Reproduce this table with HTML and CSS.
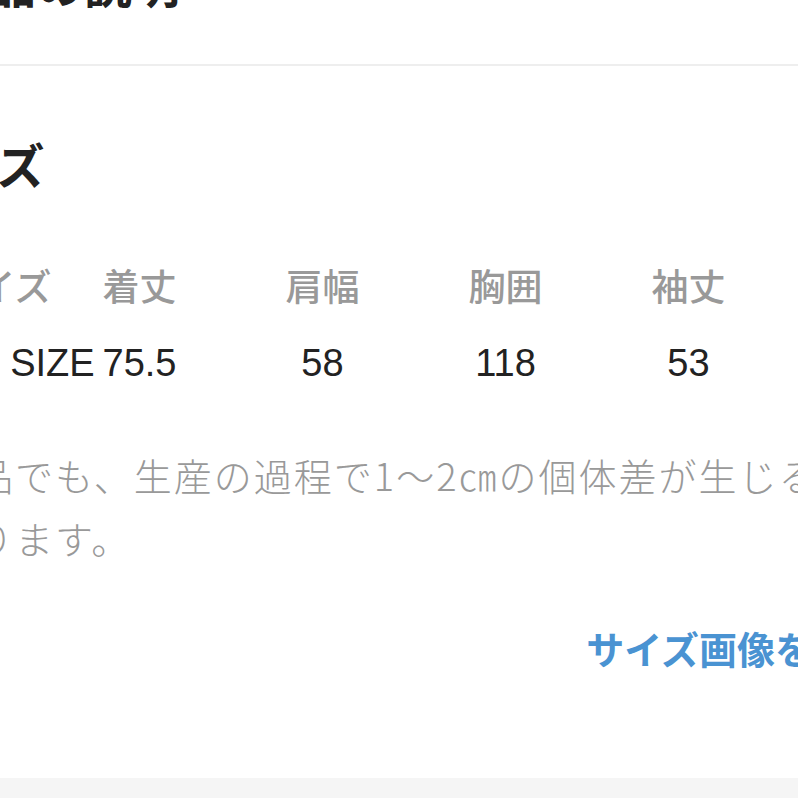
FILE: index.html
```html
<!DOCTYPE html>
<html lang="ja">
<head>
    <meta charset="UTF-8">
    <meta name="viewport" content="width=device-width, initial-scale=1.0">
    <title>商品の説明</title>
    <link rel="stylesheet" href="styles.css">
</head>
<body>
    <div class="page">
        <div class="top-block">
            <h2 class="title">商品の説明</h2>
        </div>
        <div class="size-block">
            <h2 class="heading">サイズ</h2>
            <div class="size-table">
                <span class="th">サイズ</span>
                <span class="th">着丈</span>
                <span class="th">肩幅</span>
                <span class="th">胸囲</span>
                <span class="th">袖丈</span>
                <span class="td">FREE SIZE</span>
                <span class="td">75.5</span>
                <span class="td">58</span>
                <span class="td">118</span>
                <span class="td">53</span>
            </div>
            <p class="note">同じ商品でも、生産の過程で1〜2㎝の個体差が生じる場合があります。</p>
            <div class="more-row">
                <a class="more" href="#">サイズ画像を見る</a>
            </div>
        </div>
        <div class="band"></div>
    </div>
</body>
</html>
```

FILE: styles.css
```css
body {
    margin: 0;
    font-family: "Liberation Sans", "Noto Sans CJK JP", sans-serif;
    background-color: #fff;
    color: #222;
    overflow: hidden;
}
.page {
    width: 987px;
    margin-left: -98px;
}
.top-block {
    display: flow-root;
    height: 64px;
    border-bottom: 2px solid #eeeeee;
}
.title {
    margin: -37px 0 0 38px;
    font-size: 48px;
    line-height: 1;
    font-weight: bold;
}
.size-block {
    padding-top: 78px;
    height: 634px;
}
.heading {
    margin: 0;
    font-size: 48px;
    line-height: 1;
    font-weight: bold;
}
.size-table {
    display: grid;
    grid-template-columns: 103px repeat(4, 183px);
    grid-template-rows: 70px 86px;
    align-items: center;
    justify-items: center;
    margin: 58px 0 0 43px;
    white-space: nowrap;
}
.th {
    font-size: 37px;
    font-weight: 500;
    color: #999;
}
.td {
    font-size: 38px;
    color: #222;
}
.note {
    width: 1020px;
    margin: 37px 0 0 -47px;
    font-family: "Noto Sans CJK JP", sans-serif;
    font-size: 38px;
    line-height: 63px;
    letter-spacing: 2px;
    font-weight: 300;
    color: #999;
}
.more-row {
    display: flex;
    justify-content: flex-end;
    margin-top: 51px;
}
.more {
    font-size: 38px;
    font-weight: bold;
    color: #4a93d2;
    text-decoration: none;
}
.band {
    height: 40px;
    background-color: #f5f5f5;
}
```
